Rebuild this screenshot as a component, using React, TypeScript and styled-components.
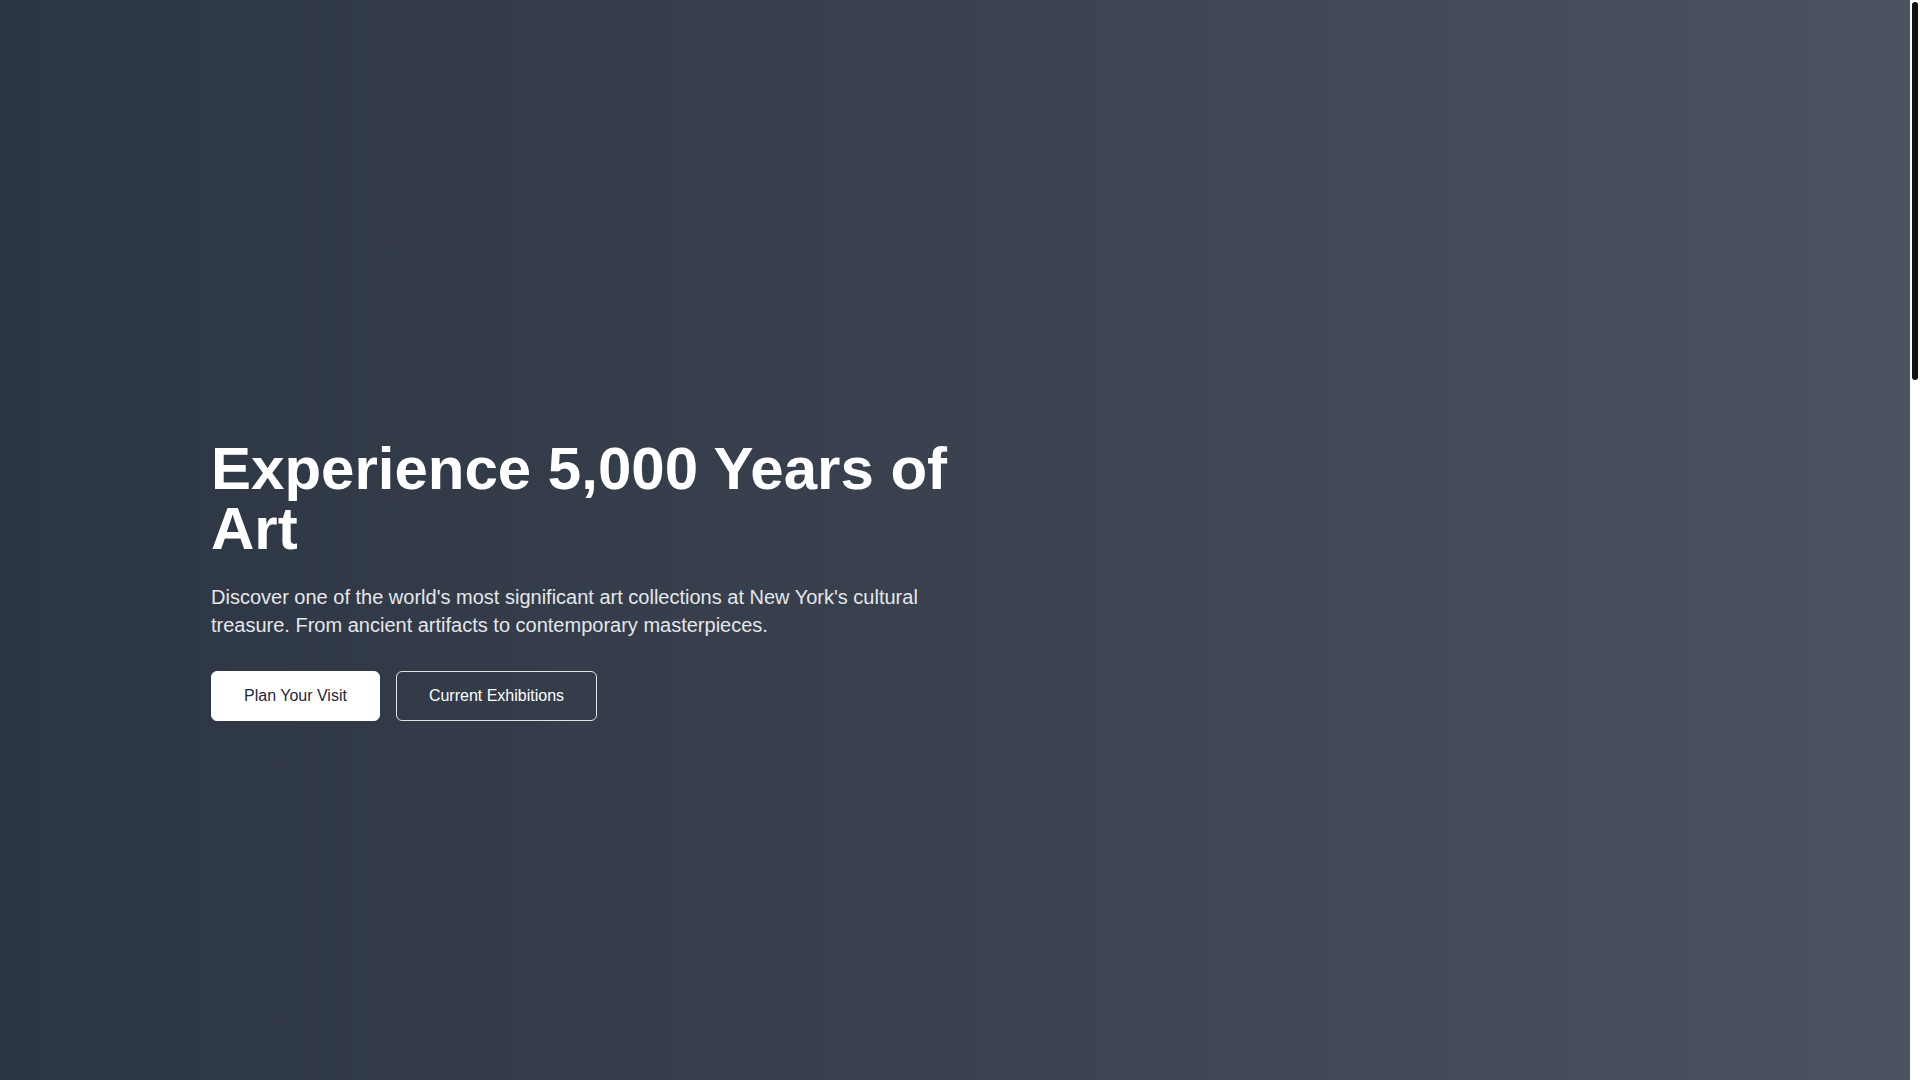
import styled, { createGlobalStyle } from "styled-components"

const GlobalStyle = createGlobalStyle`
  html, body {
    margin: 0;
    padding: 0;
    background: #ffffff;
    font-family: "Liberation Sans", Arial, sans-serif;
  }

  * {
    box-sizing: border-box;
  }
`

export default function App() {
  return (
    <>
      <GlobalStyle />
      <Shell>
        <Hero>
          <Container>
            <Content>
              <Title>Experience 5,000 Years of Art</Title>
              <Lead>
                Discover one of the world's most significant art collections at New York's cultural
                treasure. From ancient artifacts to contemporary masterpieces.
              </Lead>
              <Actions>
                <Button variant="solid">Plan Your Visit</Button>
                <Button variant="outline">Current Exhibitions</Button>
              </Actions>
            </Content>
          </Container>
        </Hero>
        <ScrollRail>
          <ScrollThumb />
        </ScrollRail>
      </Shell>
    </>
  )
}

const Shell = styled.div`
  display: flex;
  height: 100vh;
  overflow: hidden;
`

const Hero = styled.section`
  flex: 1;
  min-width: 0;
  padding-top: 80px;
  display: flex;
  align-items: center;
  background: linear-gradient(to right, #2c3543 0%, #3a424f 50%, #4c5360 100%);
`

const Container = styled.div`
  width: 100%;
  max-width: 1536px;
  margin: 0 auto;
  padding: 0 24px;
`

const Content = styled.div`
  max-width: 768px;
`

const Title = styled.h1`
  margin: 0 0 24px;
  font-size: 60px;
  line-height: 1;
  font-weight: 700;
  color: #ffffff;
`

const Lead = styled.p`
  margin: 0 0 32px;
  font-size: 20px;
  line-height: 28px;
  color: #e5e7eb;
`

const Actions = styled.div`
  display: flex;
  gap: 16px;
`

const Button = styled.button<{ variant: "solid" | "outline" }>`
  font-family: inherit;
  font-size: 16px;
  line-height: 24px;
  padding: 12px 32px;
  border-radius: 6px;
  cursor: pointer;
  border: 1px solid ${({ variant }) => (variant === "solid" ? "#ffffff" : "rgba(255, 255, 255, 0.85)")};
  background: ${({ variant }) => (variant === "solid" ? "#ffffff" : "transparent")};
  color: ${({ variant }) => (variant === "solid" ? "#1f2937" : "#ffffff")};
`

const ScrollRail = styled.div`
  flex: 0 0 10px;
  background: #ffffff;
  padding: 2px 2px 0;
`

const ScrollThumb = styled.div`
  height: 378px;
  background: #111111;
  border-radius: 3px;
`
